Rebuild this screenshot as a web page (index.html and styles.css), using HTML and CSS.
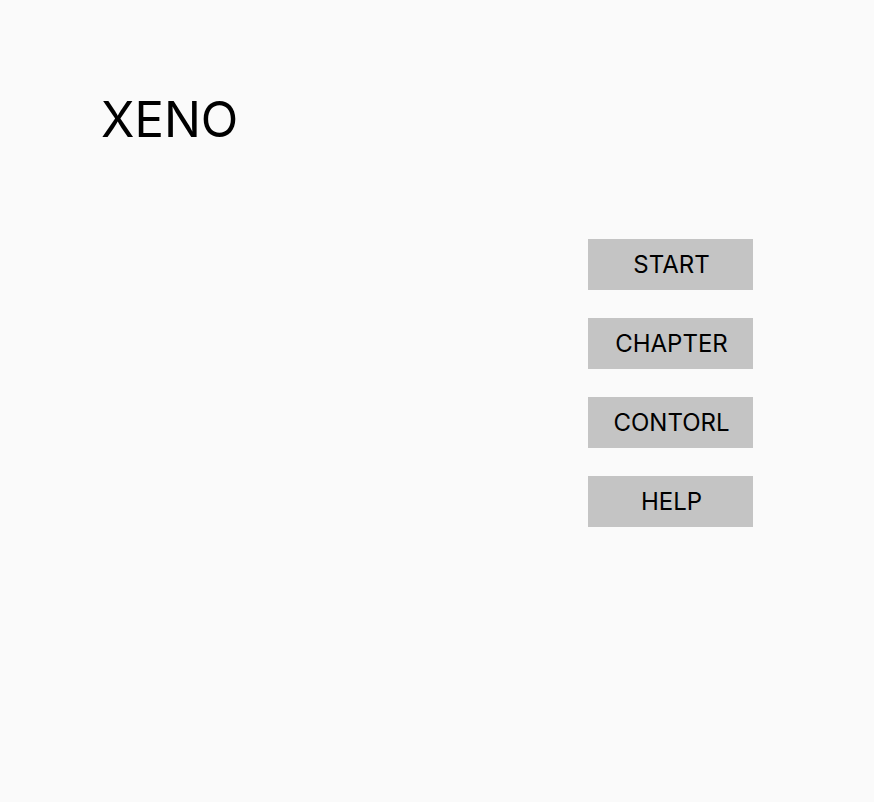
FILE: index.html
```html
<!DOCTYPE html>
<html>
<head>
<meta charset="utf-8">
<link rel="stylesheet" href="styles.css">
</head>
<body>
<div class="screen">
  <h1 class="title">XENO</h1>
  <nav class="menu">
    <button class="menu-btn">START</button>
    <button class="menu-btn">CHAPTER</button>
    <button class="menu-btn">CONTORL</button>
    <button class="menu-btn">HELP</button>
  </nav>
</div>
</body>
</html>
```
FILE: styles.css
```css
html, body {
  margin: 0;
  padding: 0;
  background: #fafafa;
  font-family: Inter, "Noto Sans", sans-serif;
}
.screen {
  width: 874px;
  height: 802px;
  box-sizing: border-box;
  padding: 88px 121px 0 101px;
  display: flex;
  flex-direction: column;
}
.title {
  margin: 0;
  font-size: 49px;
  font-weight: 400;
  line-height: 64px;
  color: #000;
}
.menu {
  margin-top: 87px;
  align-self: flex-end;
  display: flex;
  flex-direction: column;
  gap: 28px;
}
.menu-btn {
  width: 165px;
  height: 51px;
  border: none;
  background: #c4c4c4;
  font-family: Inter, "Noto Sans", sans-serif;
  font-size: 24px;
  color: #000;
  padding: 0 0 0 2px;
}
```
